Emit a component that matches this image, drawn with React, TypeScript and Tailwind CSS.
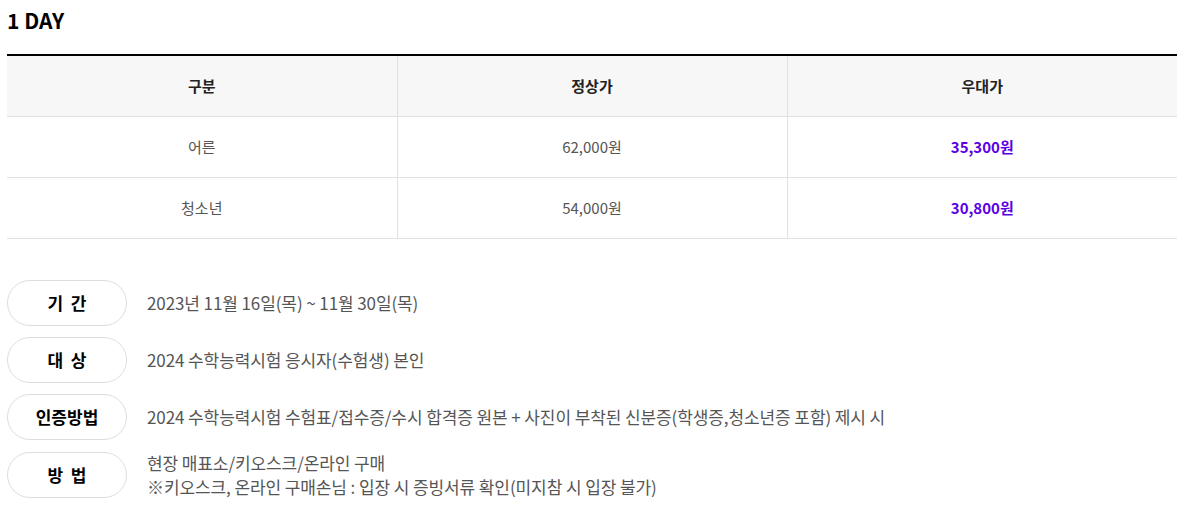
import React from "react";

const font = { fontFamily: '"Noto Sans CJK KR", "Noto Sans", sans-serif' };

const rows = [
  { a: "어른", b: "62,000원", c: "35,300원" },
  { a: "청소년", b: "54,000원", c: "30,800원" },
];

function Info({ label, children }: { label: string; children: React.ReactNode }) {
  return (
    <div className="flex items-center gap-5">
      <div className="flex h-[46px] w-[120px] shrink-0 items-center justify-center rounded-full border border-[#dddddd] bg-white text-[17px] font-bold text-black whitespace-pre">
        {label}
      </div>
      <div className="text-[17px] leading-[24px] tracking-[-0.1px] text-[#555555]">{children}</div>
    </div>
  );
}

export default function App() {
  return (
    <div className="w-[1186px] h-[532px] bg-white px-[7px] pr-[9px]" style={font}>
      <h2 className="pt-[6px] text-[21px] font-bold leading-[29px] text-black">1 DAY</h2>
      <table className="mt-[19px] w-full table-fixed border-collapse border-t-2 border-black text-center">
        <thead>
          <tr className="h-[61px] bg-[#f7f7f7] border-b border-[#e1e1e1]">
            <th className="border-r border-[#e1e1e1] text-[15px] font-bold text-[#222222]">구분</th>
            <th className="border-r border-[#e1e1e1] text-[15px] font-bold text-[#222222]">정상가</th>
            <th className="text-[15px] font-bold text-[#222222]">우대가</th>
          </tr>
        </thead>
        <tbody>
          {rows.map((r) => (
            <tr key={r.a} className="h-[61px] border-b border-[#e1e1e1]">
              <td className="border-r border-[#e1e1e1] pt-[2px] text-[15px] text-[#555555]">{r.a}</td>
              <td className="border-r border-[#e1e1e1] pt-[2px] text-[15px] text-[#555555]">{r.b}</td>
              <td className="pt-[2px] text-[15px] font-bold text-[#5b00e6]">{r.c}</td>
            </tr>
          ))}
        </tbody>
      </table>
      <div className="mt-[41px] flex flex-col gap-[11px]">
        <Info label={"기  간"}>2023년 11월 16일(목) ~ 11월 30일(목)</Info>
        <Info label={"대  상"}>2024 수학능력시험 응시자(수험생) 본인</Info>
        <Info label="인증방법">
          2024 수학능력시험 수험표/접수증/수시 합격증 원본 + 사진이 부착된 신분증(학생증,청소년증 포함) 제시 시
        </Info>
        <Info label={"방  법"}>
          <div>현장 매표소/키오스크/온라인 구매</div>
          <div>※키오스크, 온라인 구매손님 : 입장 시 증빙서류 확인(미지참 시 입장 불가)</div>
        </Info>
      </div>
    </div>
  );
}
